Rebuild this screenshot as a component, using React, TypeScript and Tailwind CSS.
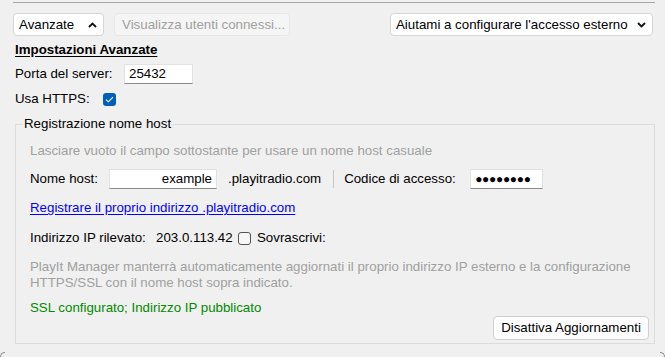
import React from 'react';

const ChevronUp = () => (
  <svg width="9" height="6" viewBox="0 0 9 6" className="shrink-0">
    <path d="M1 5 L4.5 1.5 L8 5" fill="none" stroke="#111" strokeWidth="1.8" />
  </svg>
);

const ChevronDown = () => (
  <svg width="9" height="6" viewBox="0 0 9 6" className="shrink-0">
    <path d="M1 1 L4.5 4.5 L8 1" fill="none" stroke="#111" strokeWidth="1.8" />
  </svg>
);

const Input = ({ value, className }: { value: string; className: string }) => (
  <div
    className={`h-[20px] bg-white border border-[#e2e2e2] border-b-[#8a8a8a] flex items-center px-[4px] ${className}`}
  >
    {value}
  </div>
);

export default function App() {
  return (
    <div className="relative w-[665px] h-[357px] overflow-hidden bg-[#f0f0f0] text-[13.3px] leading-[16px] text-black font-['Liberation_Sans',Arial,sans-serif]">
      <div className="h-px bg-[#a8a8a8] ml-[13px] mr-[10px] mt-[2px]" />

      {/* toolbar */}
      <div className="flex justify-between ml-[13px] mr-[12px] mt-[10px]">
        <div className="flex">
          <div className="w-[91px] h-[23px] bg-white border border-[#d5d5d5] rounded-[4px] flex items-center justify-between pl-[5px] pr-[6px]">
            <span>Avanzate</span>
            <ChevronUp />
          </div>
          <div className="ml-[10px] w-[176px] h-[23px] bg-[#f5f5f5] border border-[#e8e8e8] rounded-[4px] flex items-center pl-[7px] text-[#a0a0a0]">
            Visualizza utenti connessi...
          </div>
        </div>
        <div className="w-[263px] h-[23px] bg-white border border-[#d5d5d5] rounded-[4px] flex items-center justify-between pl-[5px] pr-[6px]">
          <span>Aiutami a configurare l'accesso esterno</span>
          <ChevronDown />
        </div>
      </div>

      <div className="ml-[15px] mt-[6px] font-bold underline underline-offset-[2px]">Impostazioni Avanzate</div>

      <div className="ml-[15px] mt-[6px] flex items-center h-[20px]">
        <span className="w-[109px]">Porta del server:</span>
        <Input value="25432" className="w-[69px]" />
      </div>

      <div className="ml-[15px] mt-[5px] flex items-center h-[20px]">
        <span className="w-[88px]">Usa HTTPS:</span>
        <span className="w-[13px] h-[13px] rounded-[3px] bg-[#005fb8] flex items-center justify-center">
          <svg width="9" height="7" viewBox="0 0 9 7">
            <path d="M1 3.6 L3.4 5.8 L8 1.2" fill="none" stroke="#fff" strokeWidth="1.1" />
          </svg>
        </span>
      </div>

      {/* host registration group */}
      <fieldset className="ml-[15px] mr-[10px] mt-[7px] h-[228px] border border-[#dcdcdc] pl-[14px] pr-[5px]">
        <legend className="ml-[-7px] px-[1px]">Registrazione nome host</legend>

        <div className="mt-[11px] text-[#a0a0a0]">Lasciare vuoto il campo sottostante per usare un nome host casuale</div>

        <div className="mt-[10px] flex items-center h-[20px]">
          <span className="w-[79px]">Nome host:</span>
          <Input value="example" className="w-[108px] justify-end" />
          <span className="ml-[11px]">.playitradio.com</span>
          <span className="ml-[12px] w-px h-[18px] bg-[#c8c8c8]" />
          <span className="ml-[10px] w-[126px]">Codice di accesso:</span>
          <Input value="●●●●●●●●" className="w-[73px] text-[12px] tracking-[-0.3px]" />
        </div>

        <div className="mt-[11px] text-[#0000ff] underline underline-offset-[2px]">
          Registrare il proprio indirizzo .playitradio.com
        </div>

        <div className="mt-[14px] flex items-center h-[16px]">
          <span className="w-[126px]">Indirizzo IP rilevato:</span>
          <span className="w-[82px]">203.0.113.42</span>
          <span className="w-[13px] h-[13px] rounded-[3px] border border-[#555] bg-[#f7f7f7]" />
          <span className="ml-[6px]">Sovrascrivi:</span>
        </div>

        <div className="mt-[13px] text-[#a0a0a0]">
          PlayIt Manager manterrà automaticamente aggiornati il proprio indirizzo IP esterno e la configurazione
          <br />
          HTTPS/SSL con il nome host sopra indicato.
        </div>

        <div className="mt-[9px] text-[#008a00]">SSL configurato; Indirizzo IP pubblicato</div>

        <div className="flex justify-end">
          <button className="w-[156px] h-[24px] bg-[#fdfdfd] border border-[#d0d0d0] rounded-[4px] flex items-center justify-center">
            Disattiva Aggiornamenti
          </button>
        </div>
      </fieldset>

      {/* window frame corners */}
      <div className="absolute left-0 bottom-[-6px] w-[5px] h-[11px] rounded-tl-[6px] border-l border-t border-[#8a8a8a]" />
      <div className="absolute right-0 bottom-[-6px] w-[5px] h-[11px] rounded-tr-[6px] border-r border-t border-[#8a8a8a]" />
    </div>
  );
}
